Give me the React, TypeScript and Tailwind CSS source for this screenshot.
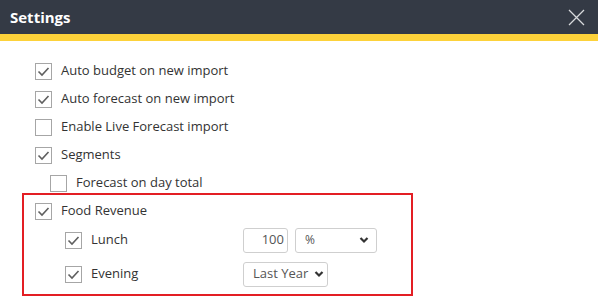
import React from "react";

const Check = ({ checked }: { checked: boolean }) => (
  <span className="flex h-[17px] w-[17px] shrink-0 items-center justify-center border border-[#a6a6a6] bg-white">
    {checked && (
      <svg width="13" height="13" viewBox="0 0 13 13" fill="none">
        <path d="M1.5 6.5 L5 10 L11.5 3" stroke="#5f5f5f" strokeWidth="1.6" />
      </svg>
    )}
  </span>
);

const Row = ({
  label,
  checked,
  className,
}: {
  label: string;
  checked: boolean;
  className: string;
}) => (
  <div className={`flex items-center gap-[9px] ${className}`}>
    <Check checked={checked} />
    <span>{label}</span>
  </div>
);

const Chevron = () => (
  <svg width="10" height="8" viewBox="0 0 10 8" fill="none">
    <path d="M1.5 2 L5 5.5 L8.5 2" stroke="#333" strokeWidth="2.2" />
  </svg>
);

export default function App() {
  return (
    <div
      className="w-[598px] h-[301px] bg-white text-[13px] text-[#333] overflow-hidden"
      style={{ fontFamily: '"Open Sans", "Liberation Sans", sans-serif' }}
    >
      <div className="flex h-[34px] items-center justify-between bg-[#343a45] pl-[10px] pr-[13px]">
        <h1 className="text-[15px] font-bold text-white">Settings</h1>
        <svg width="17" height="17" viewBox="0 0 17 17" fill="none">
          <path d="M1 1 L16 16 M16 1 L1 16" stroke="#d7d9dc" strokeWidth="1.3" />
        </svg>
      </div>
      <div className="h-[7px] bg-[#fdd23a]" />

      <div className="pt-[16px] pl-[35px]">
        <Row label="Auto budget on new import" checked className="h-[28px]" />
        <Row label="Auto forecast on new import" checked className="h-[28px]" />
        <Row label="Enable Live Forecast import" checked={false} className="h-[28px]" />
        <Row label="Segments" checked className="h-[28px]" />
        <Row label="Forecast on day total" checked={false} className="h-[24px] pt-[4px] pl-[15px]" />
      </div>

      <div className="ml-[22px] w-[391px] border-2 border-[#e31e24] pl-[11px] pt-[2px] pb-[1px]">
        <Row label="Food Revenue" checked className="h-[28px]" />
        <div className="flex h-[30px] items-center pl-[30px]">
          <div className="flex w-[178px] items-center gap-[9px]">
            <Check checked />
            <span>Lunch</span>
          </div>
          <div className="flex h-[25px] w-[45px] items-center justify-end rounded-[3px] border border-[#cfcfcf] pr-[3px] text-[#555]">
            100
          </div>
          <div className="ml-[7px] flex h-[25px] w-[82px] items-center justify-between rounded-[3px] border border-[#cfcfcf] pl-[9px] pr-[7px] text-[#555]">
            <span className="text-[12px]">%</span>
            <Chevron />
          </div>
        </div>
        <div className="flex h-[38px] items-center pl-[30px]">
          <div className="flex w-[178px] items-center gap-[9px]">
            <Check checked />
            <span>Evening</span>
          </div>
          <div className="flex h-[25px] w-[85px] items-center justify-between rounded-[3px] border border-[#cfcfcf] pl-[9px] pr-[3px] text-[#555]">
            <span>Last Year</span>
            <Chevron />
          </div>
        </div>
      </div>
    </div>
  );
}
